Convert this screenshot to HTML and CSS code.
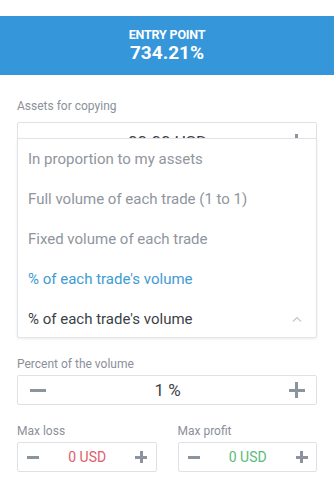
FILE: index.html
```html
<!DOCTYPE html>
<html lang="en">
<head>
  <meta charset="UTF-8" />
  <meta name="viewport" content="width=device-width, initial-scale=1.0"/>
  <title>Copy Settings</title>
  <link rel="stylesheet" href="styles.css">
</head>
<body>
  <div class="entry-bar">
    <div class="entry-title">ENTRY POINT</div>
    <div class="entry-value">734.21%</div>
  </div>

  <div class="form">
    <div class="field-label first">Assets for copying</div>
    <div class="select-area">
      <div class="stepper tall">
        <span class="minus"></span>
        <span class="stepper-value">00.00 USD</span>
        <span class="plus"></span>
      </div>

      <!-- open dropdown lies over the assets input -->
      <ul class="menu">
        <li class="menu-item">In proportion to my assets</li>
        <li class="menu-item">Full volume of each trade (1 to 1)</li>
        <li class="menu-item">Fixed volume of each trade</li>
        <li class="menu-item active">% of each trade's volume</li>
        <li class="menu-item current">
          <span>% of each trade's volume</span>
          <svg class="chevron" width="10" height="6" viewBox="0 0 10 6">
            <polyline points="1,5.5 5,1.5 9,5.5" fill="none" stroke="#c3c7cc" stroke-width="1.2"/>
          </svg>
        </li>
      </ul>
    </div>

    <div class="field-label">Percent of the volume</div>
    <div class="stepper">
      <span class="minus"></span>
      <span class="stepper-value">1 %</span>
      <span class="plus"></span>
    </div>

    <div class="limits">
      <div class="limit">
        <div class="field-label">Max loss</div>
        <div class="stepper small">
          <span class="minus"></span>
          <span class="stepper-value loss">0 USD</span>
          <span class="plus"></span>
        </div>
      </div>
      <div class="limit">
        <div class="field-label">Max profit</div>
        <div class="stepper small">
          <span class="minus"></span>
          <span class="stepper-value profit">0 USD</span>
          <span class="plus"></span>
        </div>
      </div>
    </div>
  </div>
</body>
</html>
```

FILE: styles.css
```css
body, html {
  margin: 0;
  padding: 0;
  background: #fff;
  font-family: Roboto, "Liberation Sans", sans-serif;
}

.entry-bar {
  margin-top: 16px;
  height: 59px;
  background-color: #3596da;
  color: #fff;
  text-align: center;
  display: flex;
  flex-direction: column;
  justify-content: center;
}

.entry-title {
  font-size: 12.5px;
  font-weight: bold;
  line-height: 15px;
  letter-spacing: -0.2px;
}

.entry-value {
  font-size: 19px;
  font-weight: bold;
  line-height: 22px;
}

.form {
  padding: 0 17px;
}

.field-label {
  font-size: 12px;
  line-height: 14px;
  color: #8b9099;
  margin: 19px 0 4px;
}

.field-label.first {
  margin: 24px 0 9px;
}

.select-area {
  position: relative;
  height: 216px;
}

.stepper {
  height: 28px;
  border: 1px solid #dfe1e4;
  border-radius: 2px;
  display: flex;
  align-items: center;
  justify-content: space-between;
  padding: 0 11px 0 12px;
}

.stepper.tall {
  height: 38px;
}

.stepper-value {
  font-size: 17px;
  color: #3e4249;
}

.stepper.small {
  padding: 0 8px 0 9px;
}

.stepper.small .stepper-value {
  font-size: 14px;
}

.stepper-value.loss { color: #e25b6b; }
.stepper-value.profit { color: #5cba7b; }

.minus {
  width: 16px;
  height: 3px;
  background: #8b939d;
}

.plus {
  width: 16px;
  height: 16px;
  position: relative;
}

.plus::before,
.plus::after {
  content: "";
  position: absolute;
  background: #8b939d;
}

.plus::before {
  left: 0;
  right: 0;
  top: 6.5px;
  height: 3px;
}

.plus::after {
  top: 0;
  bottom: 0;
  left: 6.5px;
  width: 3px;
}

.small .minus {
  width: 12px;
}

.small .plus {
  width: 12px;
  height: 12px;
}

.small .plus::before { top: 4.5px; }
.small .plus::after { left: 4.5px; }

.limits {
  display: flex;
  gap: 21px;
}

.limit {
  flex: 1;
}

.menu {
  position: absolute;
  top: 16px;
  left: 0;
  right: 0;
  bottom: 0;
  margin: 0;
  padding: 0;
  list-style: none;
  background: #fff;
  border: 1px solid #e2e4e7;
  border-radius: 2px;
  box-shadow: 0 1px 3px rgba(0, 0, 0, 0.08);
}

.menu-item {
  height: 40px;
  display: flex;
  align-items: center;
  justify-content: space-between;
  padding: 0 14px 0 10px;
  font-size: 15px;
  color: #90959d;
}

.menu-item.active {
  color: #3d9bd3;
}

.menu-item.current {
  color: #3b3f46;
}

.chevron {
  display: block;
}
```
